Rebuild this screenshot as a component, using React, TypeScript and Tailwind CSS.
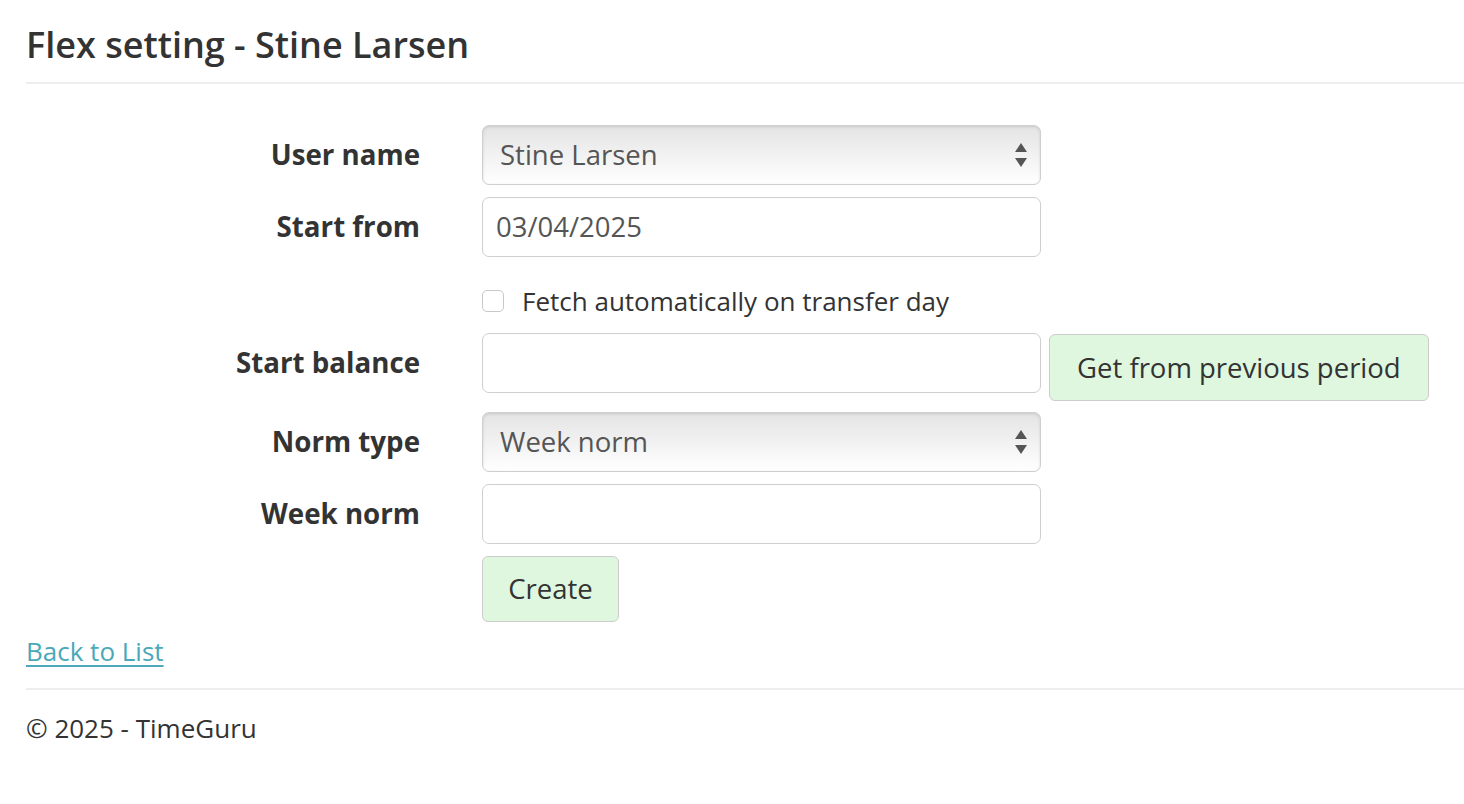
import { ReactNode } from 'react';

const FONT = { fontFamily: '"Open Sans", "Noto Sans", sans-serif' };

function Arrows() {
  return (
    <svg width="14" height="26" viewBox="0 0 14 26" className="shrink-0">
      <path d="M7 1 L13 10 L1 10 Z" fill="#555" />
      <path d="M1 16 L13 16 L7 25 Z" fill="#555" />
    </svg>
  );
}

function Row({ label, children, className = '' }: { label?: string; children: ReactNode; className?: string }) {
  return (
    <div className={`flex items-start ${className}`}>
      <div className="flex h-[60px] w-[394px] shrink-0 items-center justify-end text-[27.7px] font-bold text-[#333]">{label}</div>
      <div className="ml-[62px] flex items-start gap-2">{children}</div>
    </div>
  );
}

function SelectBox({ value }: { value: string }) {
  return (
    <div className="flex h-[60px] w-[559px] items-center justify-between rounded-[7px] border border-[#cfcfcf] bg-gradient-to-b from-[#e4e4e4] to-[#ffffff] pl-[17px] pr-[12px] text-[27.5px] text-[#555] shadow-[inset_0_1px_3px_rgba(0,0,0,0.12)]">
      <span>{value}</span>
      <Arrows />
    </div>
  );
}

function TextBox({ value = '' }: { value?: string }) {
  return (
    <div className="flex h-[60px] w-[559px] items-center rounded-[7px] border border-[#cfcfcf] bg-white px-[13px] text-[27.5px] text-[#555]">
      {value}
    </div>
  );
}

export default function App() {
  return (
    <div style={FONT} className="min-h-[804px] bg-white pl-[26px] text-[#333]">
      <h1 className="pt-[19px] text-[36px] font-semibold leading-[52px] text-[#333]">Flex setting - Stine Larsen</h1>
      <hr className="mt-[11px] border-t-2 border-[#eeeeee]" />

      <div className="mt-[41px] flex flex-col">
        <Row label="User name">
          <SelectBox value="Stine Larsen" />
        </Row>
        <Row label="Start from" className="mt-[12px]">
          <TextBox value="03/04/2025" />
        </Row>
        <div className="mt-[26px] flex h-[36px] items-center pl-[456px]">
          <span className="h-[22px] w-[22px] rounded-[5px] border border-[#c8c8c8] bg-white" />
          <span className="ml-[18px] text-[26px] text-[#333]">Fetch automatically on transfer day</span>
        </div>
        <Row label="Start balance" className="mt-[14px]">
          <TextBox />
          <button className="mt-[1px] h-[67px] rounded-[6px] border border-[#cccccc] bg-[#dff6df] px-[27px] text-[27.5px] text-[#333]">
            Get from previous period
          </button>
        </Row>
        <Row label="Norm type" className="mt-[11px]">
          <SelectBox value="Week norm" />
        </Row>
        <Row label="Week norm" className="mt-[12px]">
          <TextBox />
        </Row>
        <Row className="mt-[12px]">
          <button className="h-[66px] w-[137px] rounded-[6px] border border-[#cccccc] bg-[#dff6df] text-[27.5px] text-[#333]">
            Create
          </button>
        </Row>
      </div>

      <div className="mt-[11px] h-[36px]">
        <a href="#" className="text-[26px] leading-[36px] text-[#4aa8b8] underline underline-offset-4">Back to List</a>
      </div>
      <hr className="mt-[19px] border-t-2 border-[#eeeeee]" />
      <footer className="mt-[20px] text-[26px] leading-[36px] text-[#333]">© 2025 - TimeGuru</footer>
    </div>
  );
}
